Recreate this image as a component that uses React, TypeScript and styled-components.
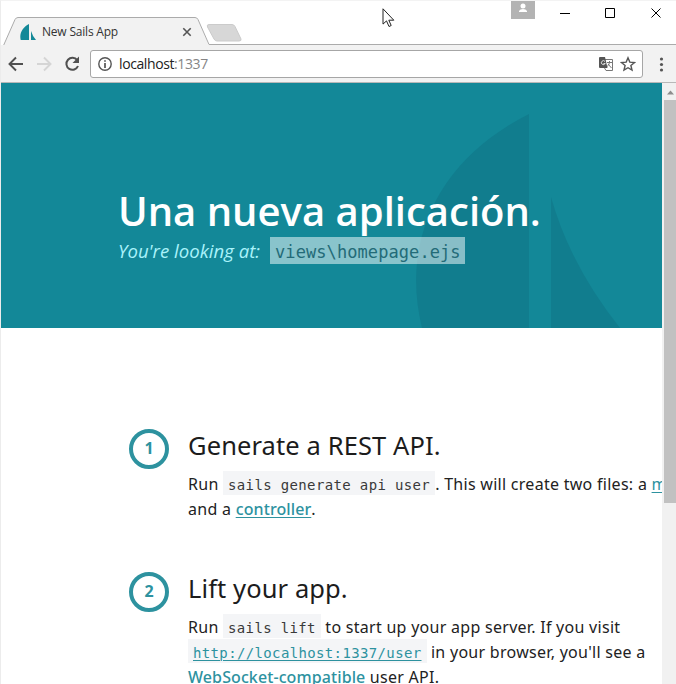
import React from "react";
import styled, { createGlobalStyle } from "styled-components";

const Global = createGlobalStyle`
  * { box-sizing: border-box; }
  body { margin: 0; background: #fff; overflow: hidden; }
`;

const Browser = styled.div`
  width: 676px;
  height: 684px;
  display: flex;
  flex-direction: column;
  overflow: hidden;
  background: #fff;
  border-left: 1px solid #ececec;
  border-top: 1px solid #f3f3f3;
  font-family: "Open Sans", sans-serif;
`;

const TitleBar = styled.header`
  height: 44px;
  flex: none;
  display: flex;
  position: relative;
`;

const TabOutline = styled.svg`
  position: absolute;
  left: -1px;
  top: 0;
`;

const Tab = styled.div`
  display: flex;
  align-items: center;
  height: 26px;
  width: 172px;
  margin: 18px 0 0 19px;
  position: relative;
`;

const TabTitle = styled.span`
  flex: 1;
  margin-left: 5px;
  font: 12px/16px "Open Sans", sans-serif;
  letter-spacing: -0.2px;
  color: #333;
`;

const WindowControls = styled.div`
  display: flex;
  margin-left: auto;
  height: 26px;
`;

const Profile = styled.div`
  width: 24px;
  height: 19px;
  margin: -1px 18px 0 0;
  background: #b3b3b3;
`;

const ControlIcons = styled.svg`
  flex: none;
`;

const Toolbar = styled.nav`
  height: 38px;
  flex: none;
  display: flex;
  align-items: center;
  background: #f2f2f2;
  border-bottom: 1px solid #b8b8b8;
  padding-left: 6px;
`;

const NavButton = styled.button<{ $dim?: boolean }>`
  width: 28px;
  height: 28px;
  padding: 0;
  border: 0;
  background: none;
  display: flex;
  align-items: center;
  color: ${(p) => (p.$dim ? "#d5d5d5" : "#505050")};
`;

const Address = styled.div`
  width: 553px;
  height: 28px;
  margin-left: -1px;
  border: 1px solid #a6a6a6;
  border-radius: 3px;
  background: #fff;
  display: flex;
  align-items: center;
  gap: 7px;
  padding: 0 6px 0 7px;
`;

const Url = styled.span`
  flex: 1;
  font: 14px/20px "Open Sans", sans-serif;
  letter-spacing: -0.4px;
  color: #222;
`;

const Port = styled.span`
  color: #858585;
`;

const Viewport = styled.div`
  flex: 1;
  min-height: 0;
  display: flex;
`;

const Page = styled.main`
  width: 661px;
  overflow: hidden;
`;

const ScrollTrack = styled.div`
  flex: 1;
  background: #f1f1f1;
  padding-left: 2px;
`;

const ScrollArrow = styled.svg`
  display: block;
`;

const ScrollThumb = styled.div`
  height: 403px;
  background: #c1c1c1;
`;

const Hero = styled.section`
  height: 245px;
  background: #138898;
  position: relative;
  padding: 102px 0 0 117px;
  color: #fff;
`;

const Sails = styled.svg`
  position: absolute;
  right: 0;
  top: 0;
`;

const HeroTitle = styled.h1`
  position: relative;
  margin: 0;
  font-size: 40px;
  line-height: 52px;
  font-weight: 600;
  white-space: nowrap;
`;

const HeroLine = styled.p`
  position: relative;
  margin: 0;
  display: flex;
  align-items: center;
  height: 27px;
  font-size: 18.6px;
  font-style: italic;
  color: #aaf3fb;
  white-space: nowrap;
`;

const HeroLabel = styled.span`
  width: 152px;
`;

const ViewPath = styled.code`
  width: 195px;
  height: 27px;
  padding-left: 5px;
  background: rgba(255, 255, 255, 0.5);
  color: #236b78;
  font: 17px/30px "DejaVu Sans Mono", monospace;
  letter-spacing: 0.08px;
`;

const Steps = styled.ol`
  list-style: none;
  margin: 0;
  padding: 101px 0 0 128px;
`;

const Step = styled.li`
  height: 143px;
  display: flex;
  gap: 19px;
`;

const StepNumber = styled.div`
  flex: none;
  width: 40px;
  height: 40px;
  border: 4px solid #2d929f;
  border-radius: 50%;
  text-align: center;
  font-size: 16px;
  line-height: 31px;
  font-weight: 700;
  color: #2d929f;
`;

const StepBody = styled.div`
  color: #222;
`;

const StepTitle = styled.h2`
  margin: -1px 0 10px;
  font-family: "Noto Sans", sans-serif;
  font-size: 25.5px;
  line-height: 34px;
  font-weight: 400;
  letter-spacing: 0.1px;
  white-space: nowrap;
  color: #1c1c1c;
`;

const Line = styled.div`
  height: 25px;
  font-family: "Noto Sans", sans-serif;
  font-size: 16px;
  line-height: 25px;
  letter-spacing: 0.28px;
  white-space: nowrap;
`;

const Code = styled.code`
  display: inline-block;
  height: 24px;
  vertical-align: top;
  margin-top: -1px;
  padding: 0 5px;
  background: #f4f5f7;
  color: #3a3a3a;
  font: 14px/29px "DejaVu Sans Mono", monospace;
  letter-spacing: 0.36px;
`;

const Link = styled.a<{ $medium?: boolean }>`
  color: #2d929f;
  font-weight: ${(p) => (p.$medium ? 500 : 400)};
  letter-spacing: ${(p) => (p.$medium ? "0.1px" : "inherit")};
  text-decoration: underline;
  text-underline-offset: 2px;
  text-decoration-thickness: 1px;
`;

function SailLogo() {
  return (
    <svg width="17" height="17" viewBox="0 0 17 17" fill="#148998">
      <path d="M9 0v16H.7C-1 9 3 3 9 0ZM11 7q1.5 5 5 9h-5Z" />
    </svg>
  );
}

function Pointer() {
  return (
    <PointerIcon width="14" height="20" viewBox="0 0 14 20">
      <path d="M1 .8v15.3l3.5-3.2L7 18.5l2.2-1-2.4-5.3h5Z" fill="#fff" stroke="#222" />
    </PointerIcon>
  );
}

const PointerIcon = styled.svg`
  position: absolute;
  left: 381px;
  top: 7px;
`;

export default function App() {
  return (
    <Browser>
      <Global />
      <TitleBar>
        <TabOutline width="676" height="44">
          <path d="M0 44.5H3.5L15 18.5Q16 16.5 18 16.5H195Q197 16.5 198 18.5L209 44.5H676V45H0Z" fill="#f2f2f2" />
          <path d="M0 44.5H3.5L15 18.5Q16 16.5 18 16.5H195Q197 16.5 198 18.5L209 43.5H676" fill="none" stroke="#ababab" />
          <path d="M209 23.5H232Q234 23.5 235 25.5L241 38Q241.500 40 239 40H217Q215 40 214 38L207.500 26Q206.500 23.500 209 23.500Z" fill="#d7d7d7" stroke="#cbcbcb" />
        </TabOutline>
        <Tab>
          <SailLogo />
          <TabTitle>New Sails App</TabTitle>
          <svg width="10" height="10" viewBox="0 0 10 10" stroke="#555" strokeWidth="1.6">
            <path d="M1.300 1.300l7.400 7.400M8.700 1.300L1.300 8.700" />
          </svg>
        </Tab>
        <Pointer />
        <WindowControls>
          <Profile>
            <svg width="24" height="18" fill="#fff">
              <circle cx="12" cy="6" r="2.500" />
              <path d="M8 12v-1q1-2 4-2t4 2v1Z" />
            </svg>
          </Profile>
          <ControlIcons width="123" height="26" fill="none" stroke="#000">
            <path d="M7 12.500h10M52.500 7.500h9v9h-9ZM98.500 7.500l9 9M107.500 7.500l-9 9" />
          </ControlIcons>
        </WindowControls>
      </TitleBar>
      <Toolbar>
        <NavButton>
          <svg width="18" height="18" viewBox="0 0 18 18" fill="none" stroke="currentColor" strokeWidth="1.9">
            <path d="M16 9H3M9 2.500L2.500 9l6.500 6.500" />
          </svg>
        </NavButton>
        <NavButton $dim>
          <svg width="18" height="18" viewBox="0 0 18 18" fill="none" stroke="currentColor" strokeWidth="1.9">
            <path d="M2 9h13M9 2.500L15.500 9 9 15.500" />
          </svg>
        </NavButton>
        <NavButton>
          <svg width="18" height="18" viewBox="0 0 18 18">
            <path d="M14.200 5.200A6 6 0 1 0 15 11" fill="none" stroke="currentColor" strokeWidth="2" />
            <path d="M16 1.500V8H9.500Z" fill="currentColor" />
          </svg>
        </NavButton>
        <Address>
          <svg width="14" height="14" viewBox="0 0 14 14" fill="none" stroke="#555" strokeWidth="1.4">
            <circle cx="7" cy="7" r="6.200" />
            <path d="M7 3.200v1.600M7 6v5" strokeWidth="1.700" />
          </svg>
          <Url>localhost<Port>:1337</Port></Url>
          <svg width="14" height="14" viewBox="0 0 14 14">
            <path d="M5 2.500h8.500v11H7L5.500 11" fill="#fff" stroke="#777" />
            <path d="M1 0h5l2.500 11H1q-1 0-1-1V1q0-1 1-1Z" fill="#555" />
            <path d="M6 4.500a2 2 0 1 0 .2 2H4.500" fill="none" stroke="#ddd" />
            <path d="M8 5.500h5M10.500 4v1.500q-.5 3-2.500 4M9 7l3.500 4" fill="none" stroke="#777" />
          </svg>
          <svg width="16" height="16" viewBox="0 0 16 16" fill="none" stroke="#555" strokeWidth="1.4">
            <path d="m8 1.800 1.800 4.300 4.700.4-3.600 3 1.100 4.600L8 11.700l-4 2.400 1.100-4.600-3.600-3 4.700-.4Z" />
          </svg>
        </Address>
        <svg width="32" height="28" fill="#555">
          <circle cx="18.500" cy="9" r="1.600" />
          <circle cx="18.500" cy="14.500" r="1.600" />
          <circle cx="18.500" cy="20" r="1.600" />
        </svg>
      </Toolbar>
      <Viewport>
        <Page>
          <Hero>
            <Sails width="246" height="245" fill="#117d8e">
              <path d="M113 31V245H6C-15 160 20 78 113 31Z" />
              <path d="M135 114Q154 182 204 245H135Z" />
            </Sails>
            <HeroTitle>Una nueva aplicación.</HeroTitle>
            <HeroLine>
              <HeroLabel>You're looking at:</HeroLabel>
              <ViewPath>views\homepage.ejs</ViewPath>
            </HeroLine>
          </Hero>
          <Steps>
            <Step>
              <StepNumber>1</StepNumber>
              <StepBody>
                <StepTitle>Generate a REST API.</StepTitle>
                <Line>Run <Code>sails generate api user</Code>. This will create two files: a <Link>model</Link></Line>
                <Line>and a <Link $medium>controller</Link>.</Line>
              </StepBody>
            </Step>
            <Step>
              <StepNumber>2</StepNumber>
              <StepBody>
                <StepTitle>Lift your app.</StepTitle>
                <Line>Run <Code>sails lift</Code> to start up your app server. If you visit</Line>
                <Line><Code><Link>http://localhost:1337/user</Link></Code> in your browser, you'll see a</Line>
                <Line><Link $medium>WebSocket-compatible</Link> user API.</Line>
              </StepBody>
            </Step>
          </Steps>
        </Page>
        <ScrollTrack>
          <ScrollArrow width="12" height="17"><path d="M3 11.500 6.500 7.500 10 11.500Z" fill="#8d8d8d" /></ScrollArrow>
          <ScrollThumb />
        </ScrollTrack>
      </Viewport>
    </Browser>
  );
}
